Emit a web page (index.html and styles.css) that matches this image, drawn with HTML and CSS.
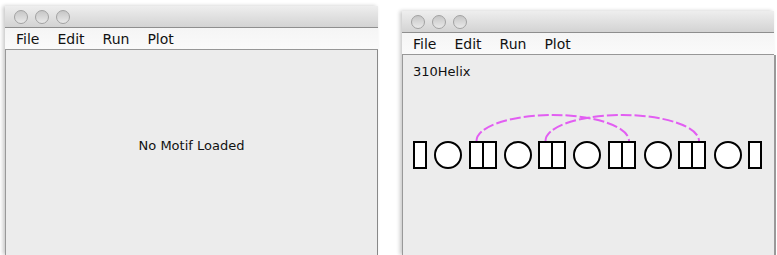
FILE: index.html
```html
<!DOCTYPE html>
<html>
<head>
<meta charset="utf-8">
<title>Motif viewer</title>
<link rel="stylesheet" href="styles.css">
</head>
<body>
<div class="desk">
  <div class="win win-a">
    <div class="titlebar">
      <span class="light"></span><span class="light"></span><span class="light"></span>
    </div>
    <div class="menubar">
      <span class="menu">File</span><span class="menu">Edit</span><span class="menu">Run</span><span class="menu">Plot</span>
    </div>
    <div class="content content-empty">
      <p class="msg">No Motif Loaded</p>
    </div>
  </div>

  <div class="win win-b">
    <div class="titlebar">
      <span class="light"></span><span class="light"></span><span class="light"></span>
    </div>
    <div class="menubar">
      <span class="menu">File</span><span class="menu">Edit</span><span class="menu">Run</span><span class="menu">Plot</span>
    </div>
    <div class="content content-split">
      <div class="pane">
        <div class="motif-name">310Helix</div>
        <svg class="motif" width="371" height="65" viewBox="0 0 371 65">
          <g class="arcs">
            <path d="M73.5 31 A76.25 26 0 0 1 226 31"/>
            <path d="M142.5 31 A76.75 26 0 0 1 296 31"/>
          </g>
          <g class="units">
            <rect x="11" y="32" width="12" height="26"/>
            <circle cx="45" cy="45" r="13"/>
            <rect x="67" y="32" width="26" height="26"/><line x1="80" y1="32" x2="80" y2="58"/>
            <circle cx="115" cy="45" r="13"/>
            <rect x="136" y="32" width="26" height="26"/><line x1="149" y1="32" x2="149" y2="58"/>
            <circle cx="184" cy="45" r="13"/>
            <rect x="206" y="32" width="26" height="26"/><line x1="219" y1="32" x2="219" y2="58"/>
            <circle cx="255" cy="45" r="13"/>
            <rect x="276" y="32" width="26" height="26"/><line x1="289" y1="32" x2="289" y2="58"/>
            <circle cx="325" cy="45" r="13"/>
            <rect x="346" y="32" width="12" height="26"/>
          </g>
        </svg>
      </div>
      <div class="scroll"><div class="scroll-cap"></div></div>
    </div>
  </div>
</div>
</body>
</html>
```

FILE: styles.css
```css
html, body {
  margin: 0;
  padding: 0;
  background: #ffffff;
  height: 255px;
  overflow: hidden;
  font-family: "DejaVu Sans", "Liberation Sans", sans-serif;
  color: #111;
}

.desk {
  display: flex;
  align-items: flex-start;
  gap: 24px;
  padding-left: 5px;
}

.win {
  flex-shrink: 0;
  display: flex;
  flex-direction: column;
  background: #ececec;
  box-shadow: -2px 0 4px rgba(0, 0, 0, 0.22);
}

.win-a {
  width: 373px;
  height: 249px;
  margin-top: 6px;
}

.win-b {
  width: 372px;
  height: 244px;
  margin-top: 11px;
}

.titlebar {
  height: 21px;
  border-bottom: 1px solid #8e8e8e;
  background: linear-gradient(#eeeeee, #d3d3d3);
  display: flex;
  align-items: center;
  gap: 7px;
  padding-left: 9px;
}

.light {
  width: 12px;
  height: 12px;
  border-radius: 50%;
  border: 1px solid #a2a2a2;
  background: linear-gradient(#c6c6c6, #e9e9e9);
}

.menubar {
  height: 20px;
  padding-top: 1px;
  border-bottom: 1px solid #979797;
  background: linear-gradient(#f5f5f5, #fafafa);
  display: flex;
  gap: 18px;
  padding-left: 11px;
  font-size: 14px;
  line-height: 20px;
}

.content {
  flex: 1;
  border-left: 1px solid #999;
  border-right: 1px solid #888;
  background: #ececec;
}

.content-empty {
  text-align: center;
}

.msg {
  margin: 0;
  padding-top: 88px;
  font-size: 13px;
  line-height: 16px;
}

.content-split {
  display: flex;
  border-right: none;
}

.pane {
  width: 371px;
  flex-shrink: 0;
}

.motif-name {
  padding: 9px 0 0 10px;
  font-size: 13px;
  line-height: 16px;
}

.motif {
  display: block;
  margin-top: 30px;
}

.arcs path {
  fill: none;
  stroke: #e25ef2;
  stroke-width: 2;
  stroke-dasharray: 11 3;
}

.units rect,
.units circle {
  fill: #ffffff;
  stroke: #000;
  stroke-width: 2;
}

.units line {
  stroke: #000;
  stroke-width: 2;
}

.scroll {
  flex: 1;
  border-left: 2px solid #999;
  padding-top: 1px;
}

.scroll-cap {
  height: 16px;
  border-top: 1px solid #999;
  border-bottom: 1px solid #999;
  background: #f7f7f7;
}
```
